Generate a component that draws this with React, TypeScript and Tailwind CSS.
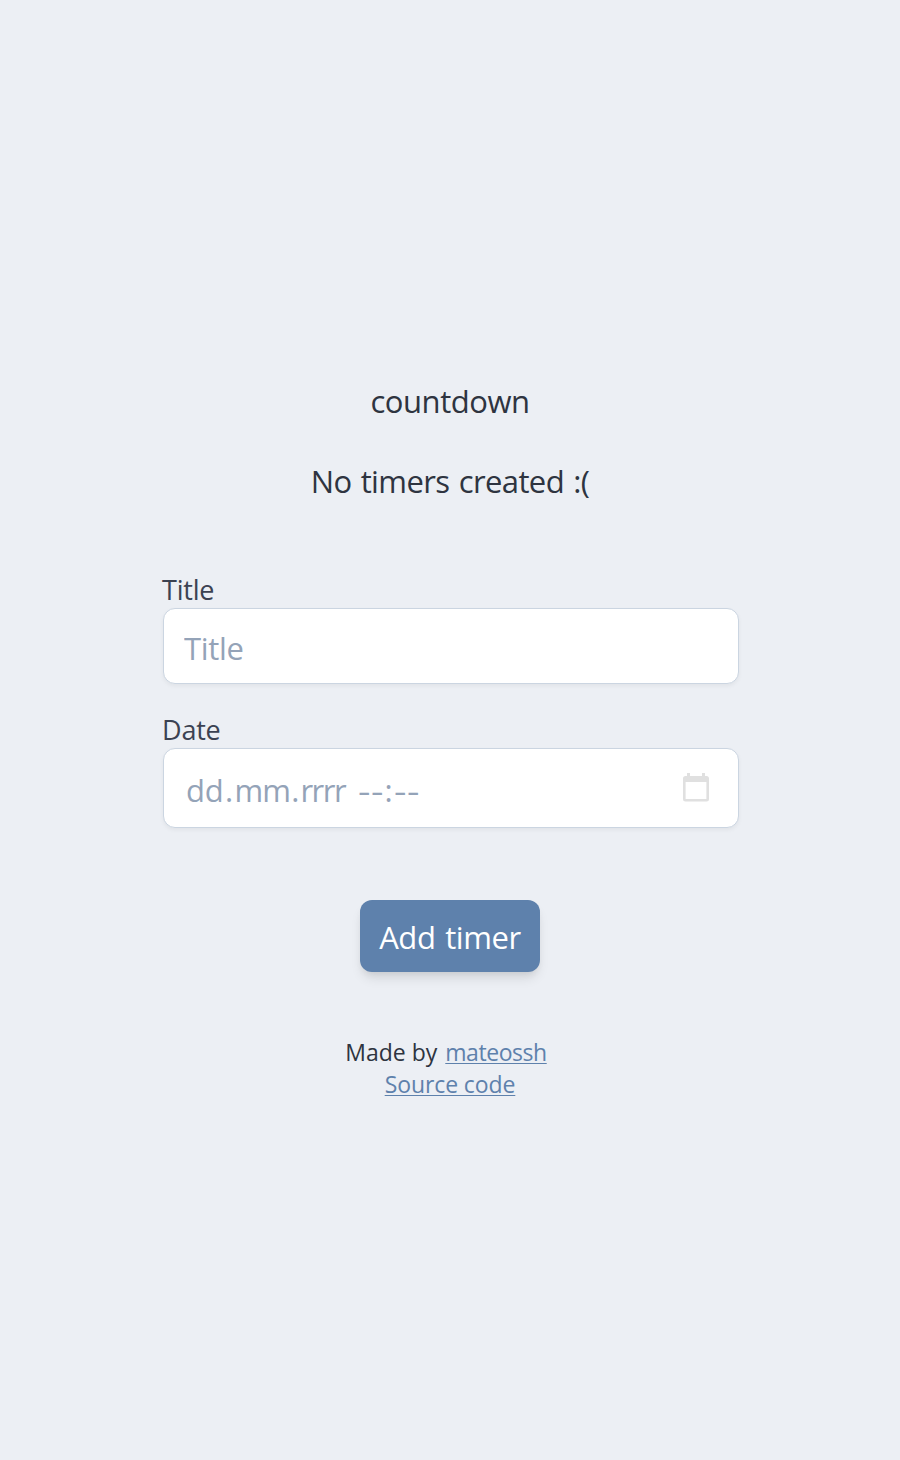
import type { ReactNode } from 'react';

function Field({ label, children }: { label: string; children: ReactNode }) {
  return (
    <label className="block">
      <span className="-ml-px block h-10 pt-0.5 text-[27px] leading-10 tracking-[-0.2px] text-[#3b4252]">{label}</span>
      {children}
    </label>
  );
}

function CalendarIcon() {
  return (
    <svg width="26" height="29" viewBox="0 0 26 29" fill="none" className="mb-0.5 shrink-0">
      <path
        fillRule="evenodd"
        clipRule="evenodd"
        d="M4 0h3v3h12V0h3v3h1.5A2.5 2.5 0 0 1 26 5.5v20.5a2.5 2.5 0 0 1-2.5 2.5h-21A2.5 2.5 0 0 1 0 26V5.5A2.5 2.5 0 0 1 2.5 3H4zM2.6 9v17h20.8V9z"
        fill="#e0e0e0"
      />
    </svg>
  );
}

export default function App() {
  return (
    <main className="flex min-h-[1460px] flex-col items-center bg-[#eceff4] pt-[379px] font-['Open_Sans','Noto_Sans',sans-serif] text-[#2e3440]">
      <h1 className="h-12 text-[31px] leading-[44px] tracking-[-0.45px]">countdown</h1>
      <p className="mt-8 h-12 whitespace-nowrap text-[31px] leading-[44px] tracking-[-0.6px] [word-spacing:1.7px]">
        No timers created :(
      </p>
      <form className="mt-[61px] flex w-[576px] flex-col" onSubmit={(e) => e.preventDefault()}>
        <div className="ml-px flex flex-col gap-6">
          <Field label="Title">
            <input
              type="text"
              placeholder="Title"
              className="block h-[76px] w-[576px] rounded-xl border border-[#cbd5e1] bg-white px-5 pt-1 text-[31px] tracking-[-0.3px] shadow-[0_2px_4px_rgba(0,0,0,0.05)] outline-none placeholder:text-[#94a3b8]"
            />
          </Field>
          <Field label="Date">
            <div className="flex h-20 w-[576px] items-center justify-between rounded-xl border border-[#cbd5e1] bg-white pl-[22px] pr-[29px] text-[31px] text-[#94a3b8] shadow-[0_2px_4px_rgba(0,0,0,0.05)]">
              <span className="flex pt-1">
                <span className="tracking-[-0.25px]">dd</span>
                <span className="pl-[1.5px] pr-[1.5px]">.</span>
                <span className="tracking-[-1.1px]">mm</span>
                <span className="pl-[1.5px] pr-px">.</span>
                <span className="tracking-[-1.5px]">rrrr</span>
                <span className="ml-[13px] flex">
                  <span className="w-[12.4px] scale-x-125 text-center">-</span>
                  <span className="w-[12.4px] scale-x-125 text-center">-</span>
                  <span className="w-[11.4px] text-center">:</span>
                  <span className="w-[12.4px] scale-x-125 text-center">-</span>
                  <span className="w-[12.4px] scale-x-125 text-center">-</span>
                </span>
              </span>
              <CalendarIcon />
            </div>
          </Field>
        </div>
        <button className="mt-[72px] h-[72px] w-[180px] self-center whitespace-nowrap rounded-xl bg-[#5e81ac] pt-0.5 text-[31px] tracking-[-0.4px] text-white shadow-[0_8px_12px_-2px_rgba(0,0,0,0.1),0_4px_8px_-4px_rgba(0,0,0,0.1)] [word-spacing:2px]">
          Add timer
        </button>
      </form>
      <footer className="mt-16 flex flex-col items-center text-[23px] leading-8">
        <p className="flex gap-2 pr-2">
          <span>Made by</span>
          <a className="tracking-[-0.45px] text-[#5e81ac] underline decoration-1 underline-offset-2">mateossh</a>
        </p>
        <a className="tracking-[-0.1px] text-[#5e81ac] underline decoration-1 underline-offset-2">Source code</a>
      </footer>
    </main>
  );
}
